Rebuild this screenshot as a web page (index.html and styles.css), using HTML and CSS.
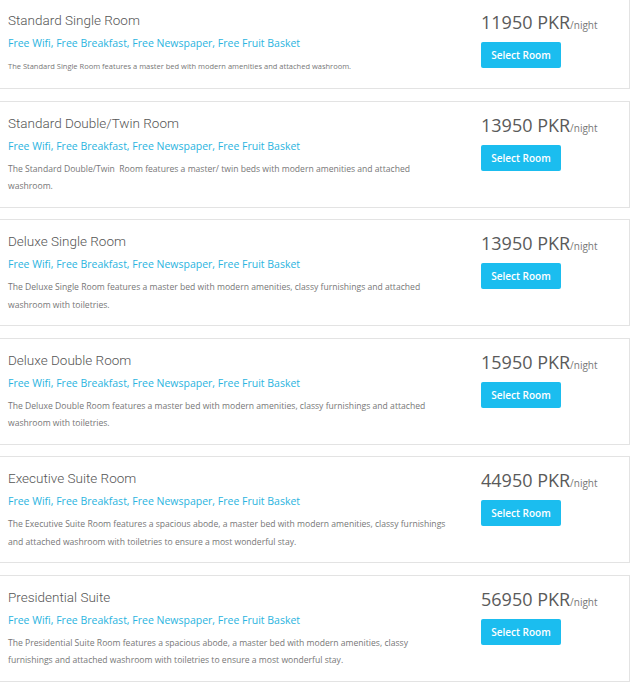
FILE: index.html
```html
<!DOCTYPE html>
<html>
<head>
<meta charset="utf-8">
<link rel="stylesheet" href="styles.css">
</head>
<body>
<div class="rooms">
  <div class="room">
    <div class="info">
      <div class="title">Standard Single Room</div>
      <div class="features">Free Wifi, Free Breakfast, Free Newspaper, Free Fruit Basket</div>
      <div class="desc desc-sm">The Standard Single Room features a master bed with modern amenities and attached washroom.</div>
    </div>
    <div class="book">
      <div class="price">11950 PKR<span class="unit">/night</span></div>
      <button class="btn">Select Room</button>
    </div>
  </div>
  <div class="room">
    <div class="info">
      <div class="title">Standard Double/Twin Room</div>
      <div class="features">Free Wifi, Free Breakfast, Free Newspaper, Free Fruit Basket</div>
      <div class="desc">The Standard Double/Twin&nbsp; Room features a master/ twin beds with modern amenities and attached<br>washroom.</div>
    </div>
    <div class="book">
      <div class="price">13950 PKR<span class="unit">/night</span></div>
      <button class="btn">Select Room</button>
    </div>
  </div>
  <div class="room">
    <div class="info">
      <div class="title">Deluxe Single Room</div>
      <div class="features">Free Wifi, Free Breakfast, Free Newspaper, Free Fruit Basket</div>
      <div class="desc">The Deluxe Single Room features a master bed with modern amenities, classy furnishings and attached washroom with toiletries.</div>
    </div>
    <div class="book">
      <div class="price">13950 PKR<span class="unit">/night</span></div>
      <button class="btn">Select Room</button>
    </div>
  </div>
  <div class="room">
    <div class="info">
      <div class="title">Deluxe Double Room</div>
      <div class="features">Free Wifi, Free Breakfast, Free Newspaper, Free Fruit Basket</div>
      <div class="desc">The Deluxe Double Room features a master bed with modern amenities, classy furnishings and attached washroom with toiletries.</div>
    </div>
    <div class="book">
      <div class="price">15950 PKR<span class="unit">/night</span></div>
      <button class="btn">Select Room</button>
    </div>
  </div>
  <div class="room">
    <div class="info">
      <div class="title">Executive Suite Room</div>
      <div class="features">Free Wifi, Free Breakfast, Free Newspaper, Free Fruit Basket</div>
      <div class="desc">The Executive Suite Room features a spacious abode, a master bed with modern amenities, classy furnishings and attached washroom with toiletries to ensure a most wonderful stay.</div>
    </div>
    <div class="book">
      <div class="price">44950 PKR<span class="unit">/night</span></div>
      <button class="btn">Select Room</button>
    </div>
  </div>
  <div class="room">
    <div class="info">
      <div class="title">Presidential Suite</div>
      <div class="features">Free Wifi, Free Breakfast, Free Newspaper, Free Fruit Basket</div>
      <div class="desc">The Presidential Suite Room features a spacious abode, a master bed with modern amenities, classy furnishings and attached washroom with toiletries to ensure a most wonderful stay.</div>
    </div>
    <div class="book">
      <div class="price">56950 PKR<span class="unit">/night</span></div>
      <button class="btn">Select Room</button>
    </div>
  </div>
</div>
</body>
</html>
```
FILE: styles.css
```css
html, body {
  margin: 0;
  padding: 0;
  background: #fff;
}
body {
  font-family: "Open Sans", "Liberation Sans", sans-serif;
  overflow: hidden;
}
.rooms {
  display: flex;
  flex-direction: column;
  gap: 11.5px;
  margin: -2px 0 0 -1px;
  width: 631px;
}
.room {
  display: grid;
  grid-template-columns: 445px 1fr;
  column-gap: 28px;
  border: 1px solid #e3e3e3;
  padding: 11px 8px 11px 8px;
}
.title {
  font-family: Roboto, "Open Sans", sans-serif;
  font-weight: 300;
  font-size: 13.5px;
  line-height: 20px;
  color: #555;
}
.features {
  margin-top: 3px;
  font-size: 10.5px;
  line-height: 20px;
  color: #2ab4e0;
}
.desc {
  margin-top: 5px;
  font-size: 8.6px;
  line-height: 17.5px;
  color: #777;
}
.desc-sm {
  font-size: 7.5px;
  line-height: 17px;
  margin-bottom: 2px;
}
.price {
  font-size: 18px;
  line-height: 24px;
  color: #5a5a5a;
}
.unit {
  font-size: 10px;
  color: #777;
}
.btn {
  display: block;
  margin-top: 5px;
  width: 80px;
  height: 26px;
  padding: 0;
  border: none;
  border-radius: 2px;
  background: #1bbdef;
  color: #fff;
  font-family: "Open Sans", sans-serif;
  font-weight: 600;
  font-size: 10px;
  cursor: pointer;
}
```
